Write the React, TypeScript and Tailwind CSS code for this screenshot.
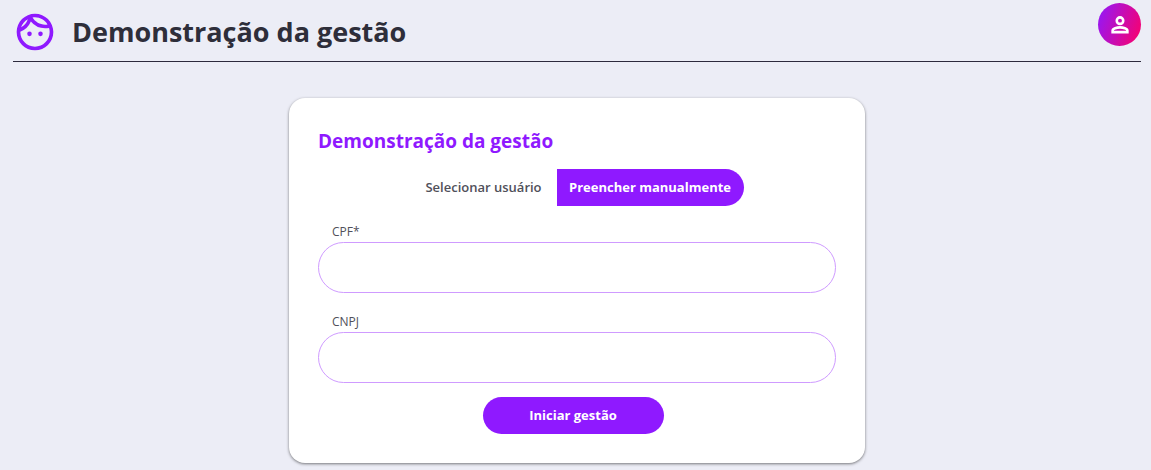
import { useState } from "react";
import { MdOutlineFace } from "react-icons/md";

const modos = [
  { id: "selecionar", label: "Selecionar usuário", shape: "w-[146px] rounded-l-full" },
  { id: "manual", label: "Preencher manualmente", shape: "w-[187px] rounded-r-full" },
];

const campos = [
  { id: "cpf", label: "CPF*" },
  { id: "cnpj", label: "CNPJ" },
];

function PersonIcon() {
  return (
    <svg className="size-[26px]" viewBox="0 0 24 24" fill="none" stroke="currentColor" strokeWidth={2.4} aria-hidden="true">
      <circle cx="12" cy="8" r="3" />
      <path d="M5.2 18.6v-1.5c0-1.7 3.9-2.9 6.8-2.9s6.8 1.2 6.8 2.9v1.5z" />
    </svg>
  );
}

export default function App() {
  const [modo, setModo] = useState("manual");

  return (
    <div className="min-h-screen bg-[#ecedf6] pl-[13px] pr-[10px] font-['Open_Sans',sans-serif]">
      <header className="flex items-start justify-between border-b border-[#2d2a3d] pt-[3px]">
        <div className="flex h-[58px] items-center gap-[15px]">
          <MdOutlineFace className="size-[44px] text-[#8f19ff]" aria-hidden="true" />
          <h1 className="text-[27px] leading-9 font-bold text-[#2e2e3a]">
            Demonstração da gestão
          </h1>
        </div>
        <button
          type="button"
          aria-label="Perfil"
          className="flex size-[43px] items-center justify-center rounded-full bg-[linear-gradient(110deg,#8f19ff,#ff0066)] text-white"
        >
          <PersonIcon />
        </button>
      </header>

      <main className="pt-9 pb-[7px]">
        <form
          className="mx-auto w-full max-w-[576px] rounded-2xl bg-white p-[29px] shadow-[0_1px_3px_rgba(0,0,0,0.5)]"
          onSubmit={(e) => e.preventDefault()}
        >
          <h2 className="text-[19px] leading-7 font-bold text-[#8f19ff]">
            Demonstração da gestão
          </h2>

          {/* Modo de preenchimento */}
          <div className="mt-[14px] flex justify-center">
            {modos.map((m) => (
              <button
                key={m.id}
                type="button"
                aria-pressed={modo === m.id}
                onClick={() => setModo(m.id)}
                className={`h-[37px] text-[13px] ${m.shape} ${
                  modo === m.id ? "bg-[#8f19ff] font-bold text-white" : "font-semibold text-[#50505a]"
                }`}
              >
                {m.label}
              </button>
            ))}
          </div>

          <div className="mt-4 flex flex-col gap-[19px]">
            {campos.map((campo) => (
              <div key={campo.id} className="flex flex-col">
                <label htmlFor={campo.id} className="px-[14px] text-[12px] leading-5 text-[#50505a]">
                  {campo.label}
                </label>
                <input
                  id={campo.id}
                  type="text"
                  className="h-[51px] w-full rounded-full border border-[#cf9bff] px-6 text-sm outline-none focus:border-[#8f19ff]"
                />
              </div>
            ))}
          </div>

          <div className="mt-[14px] flex justify-center pr-2">
            <button
              type="submit"
              className="h-[37px] w-[181px] rounded-full bg-[#8f19ff] text-[13px] font-bold text-white"
            >
              Iniciar gestão
            </button>
          </div>
        </form>
      </main>
    </div>
  );
}
